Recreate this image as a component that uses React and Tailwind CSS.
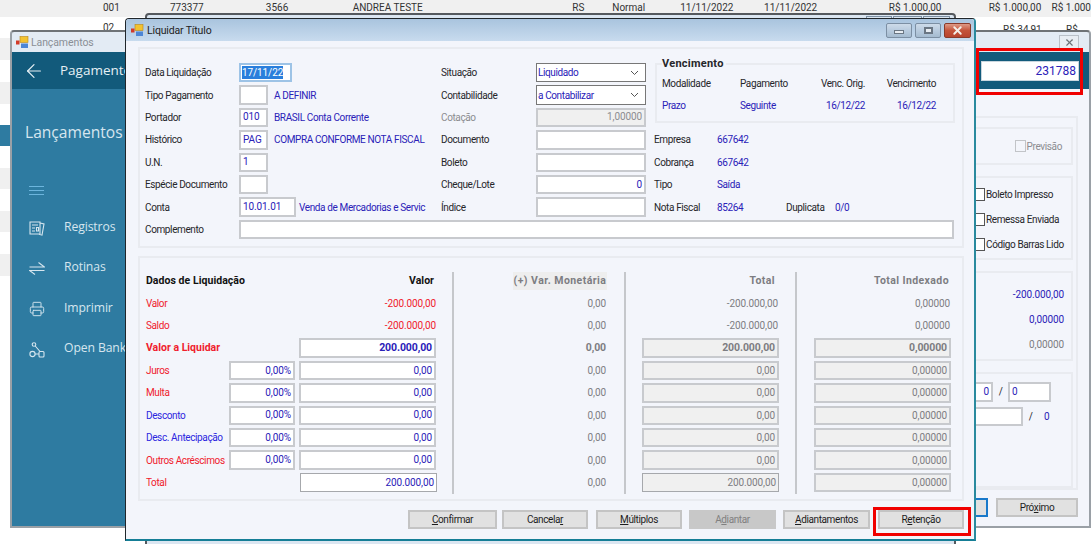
import React from 'react';
import { ArrowLeft, Printer, X } from 'lucide-react';

const stripes = [
  'h-[21px] bg-white',
  'h-[22px] bg-[#f0f0f0]',
  'h-[22px] bg-white',
  'h-[22px] bg-[#f0f0f0]',
  'h-[21px] bg-white',
  'h-[21px] bg-[#2e7ba1]',
  'h-[22px] bg-white',
  'h-[21px] bg-[#f0f0f0]',
  'h-[22px] bg-white',
  'h-[21px] bg-[#f0f0f0]',
  'h-[22px] bg-white',
  'h-[22px] bg-[#f0f0f0]',
];

const BLUE = 'text-[#2a21b8]';
const RED = 'text-[#f0202c]';
const GRAY = 'text-[#7d7d82]';

const Input = ({ value, className = '', bold, color = BLUE, align = 'text-right' }) => (
  <div className={`h-[19.5px] border-2 border-[#c8cace] bg-white flex items-center px-[2px] leading-none tracking-[-0.1px] ${align} ${color} ${bold ? 'font-bold text-[10.5px]' : ''} ${className}`}>
    <span className="w-full">{value}</span>
  </div>
);

const Field = ({ label, children, w = 'w-[94px]', muted }) => (
  <div className="flex items-center h-[22.4px]">
    <span className={`${w} shrink-0 whitespace-nowrap ${muted ? 'text-[#8c8c90]' : 'text-[#26262a]'}`}>{label}</span>
    {children}
  </div>
);

const Combo = ({ value }) => (
  <div className={`w-[110px] h-[19.5px] border border-[#777] bg-white flex items-center justify-between pl-[1px] pr-[6px] ${BLUE}`}>
    <span>{value}</span>
    <svg width="9" height="6" viewBox="0 0 9 6" fill="none" stroke="#555" strokeWidth="1"><path d="M1 1l3.5 3.5L8 1" /></svg>
  </div>
);

const Info = ({ label, value, extra }) => (
  <div className="flex items-center h-[22.4px]">
    <span className="w-[63px] text-[#26262a] whitespace-nowrap">{label}</span>
    <span className={`${BLUE} w-[69px]`}>{value}</span>
    {extra}
  </div>
);

const LiqRow = ({ label, pct, value, color = RED }) => (
  <div className="flex items-center h-[22.4px]">
    <span className={`w-[83px] shrink-0 whitespace-nowrap ${color}`}>{label}</span>
    <Input value={pct} className="w-[66px] shrink-0" />
    {value}
  </div>
);

const liqRows = [
  { label: 'Juros', color: RED },
  { label: 'Multa', color: RED },
  { label: 'Desconto', color: 'text-[#2c25e0]' },
  { label: 'Desc. Antecipação', color: 'text-[#2c25e0]' },
  { label: 'Outros Acréscimos', color: RED },
];

const Head = ({ children, className = '' }) => (
  <div className={`h-[20.2px] pb-[2.2px] flex justify-end text-[10.5px] font-bold ${className}`}>
    {children}
  </div>
);

const Plain = ({ children, bold }) => (
  <div className={`h-[22.4px] flex items-center justify-end pr-[1px] tracking-[-0.1px] ${GRAY} ${bold ? 'font-bold text-[10.5px]' : ''}`}>{children}</div>
);

const Boxed = ({ children, bold, thin }) => (
  <div className="h-[22.4px] flex items-center justify-end tracking-[-0.1px]">
    <div className={`w-[137px] h-[19.5px] bg-[#f0f0f0] flex items-center justify-end pr-[2px] ${GRAY} ${bold ? 'font-bold text-[10.5px]' : ''} ${thin ? 'border border-[#a6a8ac]' : 'border-2 border-[#c8cace]'}`}>{children}</div>
  </div>
);

const Btn = ({ children, className = '', disabled }) => (
  <div className={`h-[19px] flex items-center justify-center border-2 shrink-0 ${disabled ? 'bg-[#c8c8c8] border-[#c8c8c8] text-[#808080]' : 'bg-[#e1e1e1] border-[#c4c4c4] text-[#1e1e1e]'} ${className}`}>
    {children}
  </div>
);

const WinBtn = ({ children, className = '' }) => (
  <div className={`h-[15px] rounded-[2px] border border-[#7c8fa3] flex items-center justify-center shrink-0 ${className}`}>{children}</div>
);

const AppIcon = () => (
  <svg width="14" height="13" viewBox="0 0 14 13" className="shrink-0">
    <rect x="5" y="0.5" width="8" height="6" fill="#f2c230" stroke="#b8861a" strokeWidth="0.6" />
    <rect x="1" y="4.5" width="3.5" height="4" fill="#d23a2a" />
    <rect x="6" y="7.5" width="7" height="4.5" fill="#4d86d6" />
  </svg>
);

const NavItem = ({ icon, label }) => (
  <div className="flex items-center h-[40.6px] pl-[17px] text-[#d6e6ef] text-[12.2px] whitespace-nowrap font-['Open_Sans',sans-serif] tracking-[-0.1px]">
    <span className="w-[35px] shrink-0 flex items-center">{icon}</span>
    <span className="-mt-[3px]">{label}</span>
  </div>
);

const Check = ({ label }) => (
  <div className="flex items-center h-[25px] whitespace-nowrap text-[#26262a]">
    <span className="w-[11px] h-[13px] border border-[#555] bg-white shrink-0" />
    <span className="ml-[1px]">{label}</span>
  </div>
);

const Box = ({ children, className = '' }) => (
  <div className={`border-2 border-[#e9ebf0] ${className}`}>{children}</div>
);

export default function App() {
  return (
    <div className="relative w-[1091px] h-[544px] overflow-hidden bg-white font-['Roboto',sans-serif] text-[10px] tracking-[-0.38px]">
      {/* grid of the page behind the windows */}
      <div className="h-[17px] bg-[#f0f0f0] text-[#333] leading-[13px] tracking-normal">
        <div className="flex pt-[1px] whitespace-nowrap">
          <span className="ml-[103px] w-[67px]">001</span>
          <span className="w-[96px]">773377</span>
          <span className="w-[87px]">3566</span>
          <span className="w-[220px]">ANDREA TESTE</span>
          <span className="w-[40px]">RS</span>
          <span className="w-[68px]">Normal</span>
          <span className="w-[84px]">11/11/2022</span>
          <span className="w-[125px]">11/11/2022</span>
          <span className="w-[100px]">R$ 1.000,00</span>
          <span className="w-[63px]">R$ 1.000,00</span>
          <span>R$ 1.000</span>
        </div>
      </div>
      {stripes.map((cls, i) => <div key={i} className={cls} />)}
      <span className="absolute left-[103px] top-[20px] text-[#333] tracking-normal">02</span>
      <span className="absolute left-[1003px] top-[22px] text-[#333] tracking-normal">R$ 34,91</span>
      <span className="absolute left-[1066px] top-[22px] text-[#333] tracking-normal">R$ 42</span>

      {/* window behind the dialog */}
      <div className="absolute left-[145px] top-[13px] w-[811px] h-[540px] border-2 border-[#55595e] rounded-t-[4px] bg-[#dbe6f1] flex justify-end gap-[1px] pr-[4px]">
        <span className="w-[26px] h-[6px] mt-[1px] border border-[#7c8fa3]" />
        <span className="w-[29px] h-[6px] mt-[1px] border border-[#7c8fa3]" />
        <span className="w-[27px] h-[6px] mt-[1px] border border-[#7c8fa3]" />
      </div>

      {/* Lançamentos window */}
      <div className="absolute left-[10px] top-[30px] w-[1081px] h-[498px] flex flex-col border-2 border-[#9aa0a6] border-t-[#6e7276] rounded-t-[4px] bg-[#e3ebf4]">
        <div className="h-[20px] flex items-center pl-[3px] text-[#8a8f96] text-[10.5px] tracking-[-0.1px] shrink-0">
          <AppIcon />
          <span className="ml-[2px] pt-[2px]">Lançamentos</span>
          <div className="ml-auto mr-[10px] w-[20px] h-[15px] mt-[1px] border border-[#b9c0c8] bg-[#e8edf3] flex items-center justify-center">
            <X size={11} color="#6c7278" strokeWidth={2.5} />
          </div>
        </div>
        <div className="h-[37px] bg-[#125a7b] flex items-center shrink-0 tracking-normal">
          <ArrowLeft size={22} color="#e6f0f5" strokeWidth={1.3} className="ml-[11px]" />
          <span className="ml-[15px] text-[#e6f0f5] text-[13.5px] font-['Open_Sans',sans-serif]">Pagamentos</span>
          <div className={`ml-auto mr-[10px] w-[98px] h-[20px] bg-white border border-[#c9d6de] flex items-center justify-end pr-[2px] text-[12px] ${BLUE}`}>231788</div>
        </div>
        <div className="flex-1 flex min-h-0">
          <div className="w-[200px] bg-[#2e7ba1] shrink-0">
            <div className="pl-[13px] pt-[31px] text-[#d6e6ef] text-[15.6px] leading-[24px] tracking-normal whitespace-nowrap font-['Open_Sans',sans-serif]">Lançamentos</div>
            <svg width="15" height="9" viewBox="0 0 15 9" className="ml-[17px] mt-[42px]" stroke="#6cb5dd" strokeWidth="1"><path d="M0 .5h15M0 4.5h15M0 8.5h15" /></svg>
            <div className="mt-[13px]">
              <NavItem label="Registros" icon={
                <svg width="16" height="15" viewBox="0 0 16 15" fill="none" stroke="#d6e6ef" strokeWidth="1.1"><path d="M1 1h10v12H1zM3 4h6M3 7h3M3 10h3M7.5 6.5h2v3.5h-2zM11 2l4 1-2 11-3-.8" /></svg>
              } />
              <NavItem label="Rotinas" icon={
                <svg width="16" height="15" viewBox="0 0 16 15" fill="none" stroke="#d6e6ef" strokeWidth="1.1"><path d="M0.5 6h15L9.5 1.5M15.5 9.5H0.5L6 13.5" /></svg>
              } />
              <NavItem label="Imprimir" icon={<Printer size={16} color="#d6e6ef" strokeWidth={1.4} />} />
              <NavItem label="Open Banking" icon={
                <svg width="16" height="16" viewBox="0 0 16 16" fill="none" stroke="#d6e6ef" strokeWidth="1.1"><circle cx="5" cy="2.5" r="1.8" /><circle cx="3.5" cy="12" r="2.6" /><rect x="10" y="9.5" width="5" height="5.5" rx="1" /><path d="M6.2 4L11 9.5M6 12h4" /></svg>
              } />
            </div>
          </div>
          <div className="flex-1 flex flex-col bg-[#f3f5fb] pt-[27px] pr-[11px] pl-[40px]">
            <Box className="h-[374px] pt-[9px] px-[3px] flex flex-col gap-[11px]">
              <Box className="h-[38px] flex items-center justify-end pr-[9px]">
                <span className="w-[11px] h-[12px] border border-[#c2c4c8] bg-[#f3f5fb]" />
                <span className="ml-[1px] text-[#8c8c90]">Previsão</span>
              </Box>
              <Box className="h-[84px] flex justify-end pt-[4px]">
                <div className="w-[97px] flex flex-col">
                  <Check label="Boleto Impresso" />
                  <Check label="Remessa Enviada" />
                  <Check label="Código Barras Lido" />
                </div>
              </Box>
              <Box className="h-[90px] flex flex-col justify-start pt-[9px] pr-[7px] text-right tracking-[-0.1px]">
                <div className={`h-[25px] leading-[25px] ${BLUE}`}>-200.000,00</div>
                <div className={`h-[25px] leading-[25px] ${BLUE}`}>0,00000</div>
                <div className={`h-[25px] leading-[25px] ${GRAY}`}>0,00000</div>
              </Box>
              <Box className="flex-1 pt-[8px] flex flex-col gap-[5px]">
                <div className="flex items-center justify-end pr-[20px] gap-[3px]">
                  <Input value="0" className="w-[60px]" />
                  <span className="w-[9px] text-center text-[#26262a]">/</span>
                  <Input value="0" align="text-left" className="w-[43px]" />
                </div>
                <div className="flex items-center justify-end pr-[16px]">
                  <Input value="" className="w-[100px]" />
                  <span className="w-[15px] text-center text-[#26262a]">/</span>
                  <span className={`w-[17px] pl-[6px] ${BLUE}`}>0</span>
                </div>
              </Box>
            </Box>
            <div className="flex justify-end items-center gap-[8px] mt-[8px]">
              <div className="w-[100px] h-[19px] border-2 border-[#1979ca] bg-[#e1e1e1]" />
              <Btn className="w-[82px]"><span>Pró<u>x</u>imo</span></Btn>
            </div>
          </div>
        </div>
      </div>

      {/* annotation around the process number */}
      <div className="absolute left-[976px] top-[48px] w-[107px] h-[47px] border-[3px] border-[#f00000]" />

      {/* Liquidar Título dialog */}
      <div className="absolute left-[125px] top-[18px] w-[851px] h-[523px] flex flex-col border border-[#20262b] border-b-2 border-b-[#157e96] border-r-2 border-r-[#2a8a9e] rounded-t-[4px] bg-[#f3f5fb] text-[#26262a]">
        <div className="h-[22px] shrink-0 bg-gradient-to-b from-[#a9c4de] to-[#c8dbee] flex items-center pl-[4px] text-[10.5px] tracking-[-0.15px] text-[#222] rounded-t-[3px]">
          <AppIcon />
          <span className="ml-[3px] pt-[2px]">Liquidar Título</span>
          <div className="ml-auto mr-[3px] flex gap-[3px]">
            <WinBtn className="w-[26px] bg-gradient-to-b from-[#cddbe9] via-[#b8cbde] to-[#a5bbd0]">
              <span className="w-[10px] h-[4px] mt-[3px] bg-[#e8edf2] border border-[#6a7683]" />
            </WinBtn>
            <WinBtn className="w-[26px] bg-gradient-to-b from-[#cddbe9] via-[#b8cbde] to-[#a5bbd0]">
              <span className="w-[9px] h-[7px] bg-[#e8edf2] border-2 border-[#6a7683]" />
            </WinBtn>
            <WinBtn className="w-[27px] !border-[#8a3a2a] bg-gradient-to-b from-[#dd9a86] via-[#c4533a] to-[#b8442e]">
              <X size={13} color="#f4efe9" strokeWidth={3.5} />
            </WinBtn>
          </div>
        </div>
        <div className="flex-1 flex flex-col pl-[12px] pt-[6px]">
          {/* upper group */}
          <div className="w-[826px] h-[201px] border-2 border-[#e9ebf0] pt-[12.5px] shrink-0">
            <div className="flex">
              <div className="w-[296px] pl-[5px] box-content shrink-0">
                <Field label="Data Liquidação">
                  <div className="w-[53px] h-[19.5px] border-2 border-[#9dc3e6] bg-white flex items-center px-[1px] tracking-[-0.1px]">
                    <span className="bg-[#2a7fdc] text-white leading-[13px]">17/11/22</span>
                  </div>
                </Field>
                <Field label="Tipo Pagamento">
                  <Input value="" className="w-[29px]" />
                  <span className={`ml-[6px] ${BLUE}`}>A DEFINIR</span>
                </Field>
                <Field label="Portador">
                  <Input value="010" align="text-left" className="w-[29px]" />
                  <span className={`ml-[6px] ${BLUE}`}>BRASIL Conta Corrente</span>
                </Field>
                <Field label="Histórico">
                  <Input value="PAG" align="text-left" className="w-[29px]" />
                  <span className={`ml-[6px] whitespace-nowrap ${BLUE}`}>COMPRA CONFORME NOTA FISCAL</span>
                </Field>
                <Field label="U.N.">
                  <Input value="1" align="text-left" className="w-[29px]" />
                </Field>
                <Field label="Espécie Documento">
                  <Input value="" className="w-[29px]" />
                </Field>
                <Field label="Conta">
                  <Input value="10.01.01" align="text-left" className="w-[57px]" />
                  <span className={`ml-[3px] whitespace-nowrap ${BLUE}`}>Venda de Mercadorias e Servic</span>
                </Field>
              </div>
              <div className="w-[213px] shrink-0">
                <Field label="Situação" w="w-[95px]"><Combo value="Liquidado" /></Field>
                <Field label="Contabilidade" w="w-[95px]"><Combo value="a Contabilizar" /></Field>
                <Field label="Cotação" w="w-[95px]" muted>
                  <Input value="1,00000" color="text-[#8c8c90]" className="w-[110px] !bg-[#f0f0f0]" />
                </Field>
                <Field label="Documento" w="w-[95px]"><Input value="" className="w-[110px]" /></Field>
                <Field label="Boleto" w="w-[95px]"><Input value="" className="w-[110px]" /></Field>
                <Field label="Cheque/Lote" w="w-[95px]"><Input value="0" className="w-[110px]" /></Field>
                <Field label="Índice" w="w-[95px]"><Input value="" className="w-[110px]" /></Field>
              </div>
              <div className="w-[301px] shrink-0">
                <div className="h-[67.2px] pt-[1.5px] pl-[1px]">
                  <div className="relative w-[300px] h-[60px] border-2 border-[#e9ebf0] pt-[7px] pl-[5px]">
                    <span className="absolute left-[5px] -top-[8px] bg-[#f3f5fb] pr-[2px] font-bold text-[11px] tracking-[0.25px] text-[#26262a] leading-[14px]">Vencimento</span>
                    <div className="grid grid-cols-[78px_79px_46px_71px] grid-rows-[22px_22px] items-center">
                      <span>Modalidade</span>
                      <span>Pagamento</span>
                      <span className="text-right whitespace-nowrap">Venc. Orig.</span>
                      <span className="text-right">Vencimento</span>
                      <span className={BLUE}>Prazo</span>
                      <span className={BLUE}>Seguinte</span>
                      <span className={`text-right ${BLUE}`}>16/12/22</span>
                      <span className={`text-right ${BLUE}`}>16/12/22</span>
                    </div>
                  </div>
                </div>
                <Info label="Empresa" value="667642" />
                <Info label="Cobrança" value="667642" />
                <Info label="Tipo" value="Saída" />
                <Info label="Nota Fiscal" value="85264" extra={<><span className="w-[49px]">Duplicata</span><span className={BLUE}>0/0</span></>} />
              </div>
            </div>
            <div className="flex items-center h-[22.4px] pl-[5px]">
              <span className="w-[94px] shrink-0">Complemento</span>
              <Input value="" className="w-[715px]" />
            </div>
          </div>

          {/* lower group */}
          <div className="w-[826px] h-[245px] mt-[8px] border-2 border-[#e9ebf0] pt-[14px] pl-[6px] flex shrink-0">
            <div className="w-[291px] shrink-0">
              <Head className="!justify-between pr-[3px] text-[#111] tracking-[0.05px]">
                <span className="leading-[18px]">Dados de Liquidação</span>
                <span className="leading-[18px]">Valor</span>
              </Head>
              <div className={`h-[22.4px] flex items-center justify-between pr-[1px] ${RED}`}><span>Valor</span><span className="tracking-[-0.1px]">-200.000,00</span></div>
              <div className={`h-[22.4px] flex items-center justify-between pr-[1px] ${RED}`}><span>Saldo</span><span className="tracking-[-0.1px]">-200.000,00</span></div>
              <div className="flex items-center h-[22.4px]">
                <span className={`w-[153px] shrink-0 font-bold text-[10.5px] tracking-[0px] ${RED}`}>Valor a Liquidar</span>
                <Input value="200.000,00" bold className="w-[137px]" />
              </div>
              {liqRows.map((row) => (
                <LiqRow key={row.label} label={row.label} color={row.color} pct="0,00%"
                  value={<Input value="0,00" className="w-[137px] ml-[4px] shrink-0" />} />
              ))}
              <div className="flex items-center h-[22.4px]">
                <span className={`w-[154px] shrink-0 ${RED}`}>Total</span>
                <div className={`w-[137px] h-[19.5px] bg-white border border-[#a6a8ac] flex items-center justify-end pr-[2px] tracking-[-0.1px] ${BLUE}`}>200.000,00</div>
              </div>
            </div>

            <div className="w-[155px] ml-[15px] border-l-2 border-[#c5c7cb] shrink-0 h-[222px]">
              <Head className="text-[#7d7d82] tracking-[0.45px]">
                <span className="bg-[#eeeeee] w-[94px] h-[18px] leading-[18px] whitespace-nowrap text-center">(+) Var. Monetária</span>
              </Head>
              {['0,00', '0,00'].map((v, i) => <Plain key={i}>{v}</Plain>)}
              <Plain bold>0,00</Plain>
              {['0,00', '0,00', '0,00', '0,00', '0,00', '0,00'].map((v, i) => <Plain key={i}>{v}</Plain>)}
            </div>

            <div className="w-[155px] ml-[17px] border-l-2 border-[#c5c7cb] shrink-0 h-[222px]">
              <Head className="text-[#7d7d82] pr-[4px] tracking-[0.4px]"><span className="leading-[18px]">Total</span></Head>
              <Plain>-200.000,00</Plain>
              <Plain>-200.000,00</Plain>
              <Boxed bold>200.000,00</Boxed>
              <Boxed>0,00</Boxed>
              <Boxed>0,00</Boxed>
              <Boxed>0,00</Boxed>
              <Boxed>0,00</Boxed>
              <Boxed>0,00</Boxed>
              <Boxed thin>200.000,00</Boxed>
            </div>

            <div className="w-[156px] ml-[16px] border-l-2 border-[#c5c7cb] shrink-0 h-[222px]">
              <Head className="text-[#7d7d82] pr-[2px] tracking-[0.4px]"><span className="leading-[18px]">Total Indexado</span></Head>
              <Plain>0,00000</Plain>
              <Plain>0,00000</Plain>
              <Boxed bold>0,00000</Boxed>
              <Boxed>0,00000</Boxed>
              <Boxed>0,00000</Boxed>
              <Boxed>0,00000</Boxed>
              <Boxed>0,00000</Boxed>
              <Boxed>0,00000</Boxed>
              <Boxed>0,00000</Boxed>
            </div>
          </div>

          {/* action buttons */}
          <div className="w-[826px] mt-[9px] flex justify-end">
            <Btn className="w-[89px]"><span><u>C</u>onfirmar</span></Btn>
            <Btn className="w-[86px] ml-[5px]"><span>Cancela<u>r</u></span></Btn>
            <Btn className="w-[86px] ml-[8px]"><span><u>M</u>últiplos</span></Btn>
            <Btn disabled className="w-[87px] ml-[7px]"><span>A<u>d</u>iantar</span></Btn>
            <Btn className="w-[87px] ml-[7px]"><span><u>A</u>diantamentos</span></Btn>
            <Btn className="w-[86px] ml-[8px]"><span>R<u>e</u>tenção</span></Btn>
          </div>
        </div>
      </div>

      {/* annotation around Retenção */}
      <div className="absolute left-[873px] top-[507px] w-[98px] h-[29px] border-[3px] border-[#f00000]" />
    </div>
  );
}
